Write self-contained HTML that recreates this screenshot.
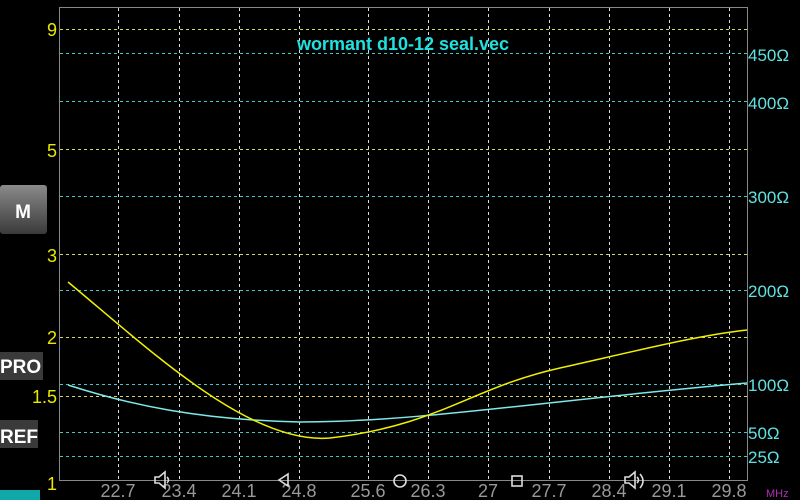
<!DOCTYPE html>
<html><head><style>
body{margin:0;background:#000;width:800px;height:500px;overflow:hidden;font-family:"Liberation Sans",sans-serif}
</style></head><body>
<svg width="800" height="500" xmlns="http://www.w3.org/2000/svg" style="position:absolute;left:0;top:0">
<defs><linearGradient id="g" x1="0" y1="0" x2="0" y2="1"><stop offset="0" stop-color="#8a8a8a"/><stop offset="1" stop-color="#3a3a3a"/></linearGradient></defs>
<g stroke="#ddd" stroke-width="1" stroke-dasharray="3,3">
<line x1="118.5" y1="8" x2="118.5" y2="480"/><line x1="179.5" y1="8" x2="179.5" y2="480"/><line x1="239.5" y1="8" x2="239.5" y2="480"/><line x1="299.5" y1="8" x2="299.5" y2="480"/><line x1="368.5" y1="8" x2="368.5" y2="480"/><line x1="428.5" y1="8" x2="428.5" y2="480"/><line x1="488.5" y1="8" x2="488.5" y2="480"/><line x1="549.5" y1="8" x2="549.5" y2="480"/><line x1="609.5" y1="8" x2="609.5" y2="480"/><line x1="669.5" y1="8" x2="669.5" y2="480"/><line x1="729.5" y1="8" x2="729.5" y2="480"/>
</g>
<g stroke="#d8d860" stroke-width="1" stroke-dasharray="3,3">
<line x1="60" y1="29.5" x2="747" y2="29.5"/><line x1="60" y1="149.5" x2="747" y2="149.5"/><line x1="60" y1="254.5" x2="747" y2="254.5"/><line x1="60" y1="337.5" x2="747" y2="337.5"/><line x1="60" y1="396.5" x2="747" y2="396.5"/>
</g>
<g stroke="#40c8c8" stroke-width="1" stroke-dasharray="3,3">
<line x1="60" y1="53.5" x2="747" y2="53.5"/><line x1="60" y1="101.5" x2="747" y2="101.5"/><line x1="60" y1="196.5" x2="747" y2="196.5"/><line x1="60" y1="290.5" x2="747" y2="290.5"/><line x1="60" y1="384.5" x2="747" y2="384.5"/><line x1="60" y1="432.5" x2="747" y2="432.5"/><line x1="60" y1="456.5" x2="747" y2="456.5"/>
</g>
<path d="M59.5 7.5H747.5V480.5H59.5Z" fill="none" stroke="#888" stroke-width="1"/>
<path d="M68 385 C130 405,200 420,300 422 C420 422,550 400,747 383" fill="none" stroke="#7fe8e8" stroke-width="1.5"/>
<path d="M68 282 C150 350,250 445,330 438 C440 425,470 388,560 368 C640 350,700 335,747 330" fill="none" stroke="#f0f000" stroke-width="1.5"/>
<text x="403" y="50" fill="#20e0e0" font-size="18" font-weight="bold" text-anchor="middle">wormant d10-12 seal.vec</text>
<g fill="#e8e800" font-size="18" text-anchor="end">
<text x="57" y="36">9</text><text x="57" y="157">5</text><text x="57" y="262">3</text><text x="57" y="344">2</text><text x="57" y="403">1.5</text><text x="57" y="490">1</text>
</g>
<g fill="#60e0e0" font-size="17">
<text x="748" y="61">450Ω</text><text x="748" y="109">400Ω</text><text x="748" y="203">300Ω</text><text x="748" y="297">200Ω</text><text x="748" y="391">100Ω</text><text x="748" y="439">50Ω</text><text x="748" y="463">25Ω</text>
</g>
<g fill="#999" font-size="18" text-anchor="middle">
<text x="118" y="497">22.7</text><text x="179" y="497">23.4</text><text x="239" y="497">24.1</text><text x="299" y="497">24.8</text><text x="368" y="497">25.6</text><text x="428" y="497">26.3</text><text x="488" y="497">27</text><text x="549" y="497">27.7</text><text x="609" y="497">28.4</text><text x="669" y="497">29.1</text><text x="729" y="497">29.8</text>
</g>
<text x="766" y="497" fill="#b030b0" font-size="11">MHz</text>
<rect x="0" y="185" width="47" height="49" rx="3" fill="url(#g)"/>
<text x="23" y="218" fill="#fff" font-size="19" font-weight="bold" text-anchor="middle">M</text>
<rect x="0" y="352" width="43" height="28" fill="#3a3a3a"/>
<text x="0" y="373" fill="#fff" font-size="19" font-weight="bold">PRO</text>
<rect x="0" y="420" width="38" height="28" fill="#3a3a3a"/>
<text x="0" y="443" fill="#fff" font-size="19" font-weight="bold">REF</text>
<rect x="0" y="490" width="40" height="10" fill="#10a8a8"/>
<g fill="none" stroke="#ddd" stroke-width="1.6">
<path d="M155 477h4l6-5v16l-6-5h-4z M167 477q3 3 0 6"/>
<path d="M288 474l-9 6 9 6z"/>
<circle cx="400" cy="481" r="6"/>
<rect x="512" y="476" width="10" height="10"/>
<path d="M625 477h4l6-5v16l-6-5h-4z M637 477q3 3 0 6 M640 474q6 7 0 14"/>
</g>
</svg>
</body></html>
